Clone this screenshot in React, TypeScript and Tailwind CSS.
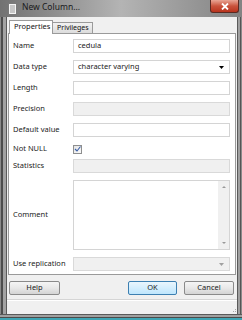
import React from "react";

const font = { fontFamily: '"Noto Sans", "Open Sans", sans-serif' };

function Box({ disabled, children, className = "" }: { disabled?: boolean; children?: React.ReactNode; className?: string }) {
  return (
    <div
      className={
        "flex h-[14px] flex-1 items-center border px-[4px] text-[7.5px] text-[#222] " +
        (disabled ? "border-[#d9d9d9] bg-[#f0f0f0] " : "border-[#d4d4d4] bg-white ") +
        className
      }
    >
      {children}
    </div>
  );
}

function Row({ label, children, h = "h-[14px]", mt = "mt-[7px]" }: { label: string; children: React.ReactNode; h?: string; mt?: string }) {
  return (
    <div className={"flex items-center " + h + " " + mt}>
      <div className="w-[60px] text-[7.5px] leading-none text-[#1b1b1b]">{label}</div>
      {children}
    </div>
  );
}

function Arrow({ color = "#000" }: { color?: string }) {
  return (
    <svg width="5" height="3" viewBox="0 0 5 3" className="ml-auto mr-[1px]">
      <path d="M0 0h5L2.5 3z" fill={color} />
    </svg>
  );
}

function Btn({ label, w, primary }: { label: string; w: string; primary?: boolean }) {
  return (
    <div
      className={
        "flex h-[14px] items-center justify-center rounded-[2px] border bg-gradient-to-b text-[7.5px] text-[#222] " +
        w +
        (primary
          ? " border-[#3c7fb1] from-[#eaf6fd] to-[#bee6fd]"
          : " border-[#8a8a8a] from-[#f5f5f5] via-[#e8e8e8] to-[#d4d4d4]")
      }
    >
      {label}
    </div>
  );
}

export default function App() {
  return (
    <div style={font} className="flex h-[320px] w-[242px] flex-col overflow-hidden bg-gradient-to-r from-[#727272] via-[#b4b4b4] to-[#838383]">
      {/* title bar */}
      <div className="flex h-[17px] items-start">
        <svg width="9" height="12" viewBox="0 0 9 12" className="ml-[8px] mt-[3px]">
          <rect x="0.5" y="0.5" width="8" height="11" fill="#f4f4f4" stroke="#7a7a7a" />
          <path d="M2 3h5M2 5h5M2 7h5M2 9h5" stroke="#9a9a9a" />
        </svg>
        <span className="ml-[5px] mt-[3px] text-[8.5px] leading-none text-[#1a1a1a]">New Column...</span>
        <div className="ml-auto mr-[3px] flex h-[13px] w-[29px] items-center justify-center rounded-b-[3px] border border-t-0 border-[#5a2a22] bg-gradient-to-b from-[#e8a595] via-[#c9533c] to-[#b8321c]">
          <svg width="8" height="7" viewBox="0 0 8 7">
            <path d="M1 0.5l6 6M7 0.5l-6 6" stroke="#fff" strokeWidth="1.8" />
          </svg>
        </div>
      </div>

      <div className="flex flex-1">
        {/* left frame */}
        <div className="flex w-[7px]">
          <div className="w-[1px] bg-[#8a8a8a]" />
          <div className="w-[2px] bg-[#4c4c4c]" />
          <div className="w-[3px] bg-[#a2a2a2]" />
          <div className="w-[1px] bg-[#5a5a5a]" />
        </div>

        {/* client area */}
        <div className="flex w-[230px] flex-col bg-[#f0f0f0]">
          <div className="flex h-[16px] items-end pl-[2px]">
            <div className="relative z-10 -mb-px flex h-[14px] w-[44px] items-start border border-b-0 border-[#9a9a9a] bg-white pl-[4px] pt-[2px] text-[7.5px] leading-none text-[#111]">
              Properties
            </div>
            <div className="flex h-[11px] w-[40px] items-start border border-b-0 border-l-0 border-[#9a9a9a] bg-gradient-to-b from-[#f2f2f2] to-[#dcdcdc] pl-[4px] pt-[1px] text-[7px] leading-none text-[#111]">
              Privileges
            </div>
          </div>

          <div className="mx-[1px] flex h-[242px] flex-col border border-[#9a9a9a] bg-white pl-[4px] pr-[5px] pt-[5px]">
            <Row label="Name" mt="mt-0">
              <Box>cedula</Box>
            </Row>
            <Row label="Data type">
              <Box>
                character varying
                <Arrow />
              </Box>
            </Row>
            <Row label="Length">
              <Box />
            </Row>
            <Row label="Precision">
              <Box disabled />
            </Row>
            <Row label="Default value">
              <Box />
            </Row>
            <Row label="Not NULL" h="h-[10px]">
              <div className="flex h-[9px] w-[9px] items-center justify-center border border-[#8e8f8f] bg-gradient-to-br from-[#e4e4e4] to-[#fafafa]">
                <svg width="7" height="6" viewBox="0 0 7 6">
                  <path d="M1 3l2 2 3.5-4.5" stroke="#3a5fa8" strokeWidth="1.1" fill="none" />
                </svg>
              </div>
            </Row>
            <Row label="Statistics" mt="mt-[5px]">
              <Box disabled />
            </Row>
            <Row label="Comment" h="h-[70px]">
              <div className="flex h-[70px] flex-1 border border-[#d4d4d4] bg-white">
                <div className="flex-1" />
                <div className="flex w-[11px] flex-col items-center justify-between bg-[#f0f0f0] py-[5px]">
                  <svg width="4" height="2" viewBox="0 0 4 2"><path d="M0 2h4L2 0z" fill="#999" /></svg>
                  <svg width="4" height="2" viewBox="0 0 4 2"><path d="M0 0h4L2 2z" fill="#999" /></svg>
                </div>
              </div>
            </Row>
            <Row label="Use replication">
              <Box disabled>
                <Arrow color="#a0a0a0" />
              </Box>
            </Row>
          </div>

          <div className="mt-[6px] flex pl-[2px] pr-[3px]">
            <Btn label="Help" w="w-[51px]" />
            <div className="flex-1" />
            <Btn label="OK" w="w-[49px]" primary />
            <div className="w-[7px]" />
            <Btn label="Cancel" w="w-[50px]" />
          </div>

          <div className="mt-[4px] h-px bg-[#d5d5d5]" />
          <div className="flex flex-1 items-end justify-end border-t border-white pb-[1px] pr-[1px]">
            <svg width="5" height="5" viewBox="0 0 5 5">
              <path d="M4 1h1v1H4zM2 3h1v1H2zM4 3h1v1H4z" fill="#a8a8a8" />
            </svg>
          </div>
        </div>

        {/* right frame */}
        <div className="flex w-[5px]">
          <div className="w-[1px] bg-[#5a5a5a]" />
          <div className="w-[2px] bg-[#a0a0a0]" />
          <div className="w-[1px] bg-[#555]" />
          <div className="w-[1px] bg-[#8a8a8a]" />
        </div>
      </div>

      {/* bottom frame */}
      <div className="flex h-[6px] flex-col">
        <div className="h-[1px] bg-[#5a5a5a]" />
        <div className="h-[2px] bg-[#a0a0a0]" />
        <div className="h-[1px] bg-[#4c4c4c]" />
        <div className="h-[2px] bg-[#3fa5b4]" />
      </div>
    </div>
  );
}
